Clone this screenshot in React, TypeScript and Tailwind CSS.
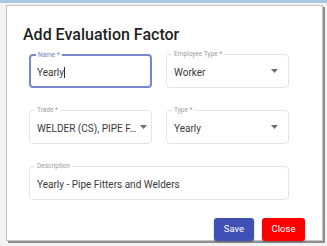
import React from "react";

const font = { fontFamily: "Roboto, 'Liberation Sans', sans-serif" };

function Caret() {
  return (
    <svg width="7" height="4" viewBox="0 0 7 4" className="shrink-0">
      <path d="M0 0h7L3.5 4z" fill="#6f6f6f" />
    </svg>
  );
}

function Field({
  label,
  value,
  select,
  focused,
  className,
}: {
  label: string;
  value: string;
  select?: boolean;
  focused?: boolean;
  className?: string;
}) {
  return (
    <div
      className={`relative h-[34px] rounded-[4px] flex items-center gap-[4px] ${
        focused ? "border-2 border-[#7986cb] pl-[6px] pr-[12px]" : "border border-[#e4e4e4] pl-[7px] pr-[10px]"
      } ${className ?? ""}`}
    >
      <span
        className={`absolute left-[5px] top-[-5px] bg-white px-[2px] text-[6.5px] leading-[8px] ${
          focused ? "text-[#7380c8]" : "text-[#9a9a9a]"
        }`}
      >
        {label}
      </span>
      <span className="flex-1 whitespace-nowrap text-[10px] text-[#3a3a3a] pt-[2px]">
        {value}
        {focused && <span className="inline-block w-px h-[11px] bg-[#333] align-[-2px]" />}
      </span>
      {select && <Caret />}
    </div>
  );
}

export default function App() {
  return (
    <div className="w-[327px] h-[246px] bg-[#f2f2f2] overflow-hidden" style={font}>
      <div className="h-[3px] bg-[#a9c9e3]" />
      <div className="ml-[6px] mt-[2px] w-[317px] h-[236px] bg-white border border-[#c4c4c4] shadow-[2px_2px_0_#8e8e8e]">
        <h1 className="pl-[16px] pt-[19px] text-[16px] leading-[20px] font-medium text-[#1f1f1f]">
          Add Evaluation Factor
        </h1>
        <div className="pl-[22px] pt-[9px] w-[282px] grid grid-cols-2 gap-x-[14px] gap-y-[22px]">
          <Field label="Name *" value="Yearly" focused />
          <Field label="Employee Type *" value="Worker" select />
          <Field label="Trade *" value="WELDER (CS), PIPE F…" select />
          <Field label="Type *" value="Yearly" select />
          <Field label="Description" value="Yearly - Pipe Fitters and Welders" className="col-span-2" />
        </div>
        <div className="flex justify-end gap-[8px] pr-[17px] pt-[18px]">
          <button className="w-[40px] h-[23px] rounded-[3px] bg-[#3f51b5] text-white text-[9.5px] shadow-[0_1px_2px_rgba(0,0,0,0.3)]">
            Save
          </button>
          <button className="w-[43px] h-[23px] rounded-[3px] bg-[#ff0000] text-white text-[9.5px] shadow-[0_1px_2px_rgba(0,0,0,0.3)]">
            Close
          </button>
        </div>
      </div>
    </div>
  );
}
